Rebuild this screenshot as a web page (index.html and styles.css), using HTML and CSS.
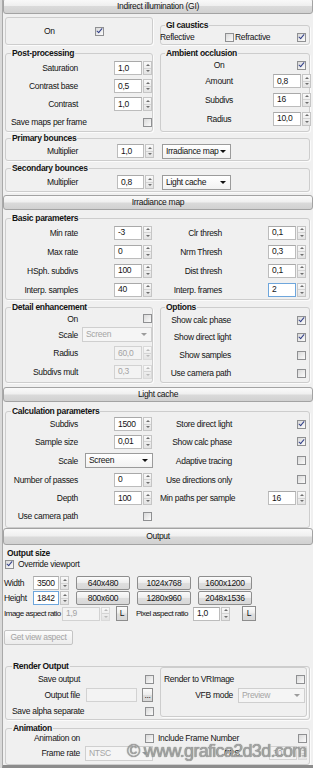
FILE: index.html
```html
<!DOCTYPE html>
<html lang="en">
<head>
<meta charset="utf-8">
<title>Render settings</title>
<link rel="stylesheet" href="styles.css">
</head>
<body>
<div class="page">

<div class="roll-head first">Indirect illumination (GI)</div>
<div class="roll-body">
  <div class="cols">
    <div class="col lcol">
      <div class="box onbox"><span class="on-lbl">On</span><span class="cb on"></span></div>
      <fieldset class="grp lgrp pp">
        <legend>Post-processing</legend>
        <div class="row h18"><span class="lbl">Saturation</span><span class="ctl"><span class="inp">1,0</span><span class="spin"><i></i><i></i></span></span></div>
        <div class="row h18"><span class="lbl">Contrast base</span><span class="ctl"><span class="inp">0,5</span><span class="spin"><i></i><i></i></span></span></div>
        <div class="row h18"><span class="lbl">Contrast</span><span class="ctl"><span class="inp">1,0</span><span class="spin"><i></i><i></i></span></span></div>
        <div class="row h18"><span class="lbl">Save maps per frame</span><span class="ctl"><span class="cb"></span></span></div>
      </fieldset>
    </div>
    <div class="col rcol">
      <fieldset class="grp rgrp gic">
        <legend>GI caustics</legend>
        <div class="row h14 caus"><span class="c-l1">Reflective</span><span class="cb"></span><span class="c-l2">Refractive</span><span class="cb on"></span></div>
      </fieldset>
      <fieldset class="grp rgrp ao">
        <legend>Ambient occlusion</legend>
        <div class="row h14"><span class="lbl">On</span><span class="ctl"><span class="cb on"></span></span></div>
        <div class="row h18"><span class="lbl">Amount</span><span class="ctl"><span class="inp">0,8</span><span class="spin"><i></i><i></i></span></span></div>
        <div class="row h19"><span class="lbl">Subdivs</span><span class="ctl"><span class="inp">16</span><span class="spin"><i></i><i></i></span></span></div>
        <div class="row h19"><span class="lbl">Radius</span><span class="ctl"><span class="inp">10,0</span><span class="spin"><i></i><i></i></span></span></div>
      </fieldset>
    </div>
  </div>

  <fieldset class="grp fgrp pb">
    <legend>Primary bounces</legend>
    <div class="row h16 bounce"><span class="lbl">Multiplier</span><span class="inp">1,0</span><span class="spin"><i></i><i></i></span><span class="dd">Irradiance map</span></div>
  </fieldset>
  <fieldset class="grp fgrp sb">
    <legend>Secondary bounces</legend>
    <div class="row h18 bounce"><span class="lbl">Multiplier</span><span class="inp">0,8</span><span class="spin"><i></i><i></i></span><span class="dd">Light cache</span></div>
  </fieldset>
</div>

<div class="roll-head irr">Irradiance map</div>
<div class="roll-body">
  <fieldset class="grp fgrp basic">
    <legend>Basic parameters</legend>
    <div class="row2">
      <div class="row h19 half l"><span class="lbl">Min rate</span><span class="ctl"><span class="inp">-3</span><span class="spin"><i></i><i></i></span></span></div>
      <div class="row h19 half r"><span class="lbl">Clr thresh</span><span class="ctl"><span class="inp">0,1</span><span class="spin"><i></i><i></i></span></span></div>
    </div>
    <div class="row2">
      <div class="row h19 half l"><span class="lbl">Max rate</span><span class="ctl"><span class="inp">0</span><span class="spin"><i></i><i></i></span></span></div>
      <div class="row h19 half r"><span class="lbl">Nrm Thresh</span><span class="ctl"><span class="inp">0,3</span><span class="spin"><i></i><i></i></span></span></div>
    </div>
    <div class="row2">
      <div class="row h19 half l"><span class="lbl">HSph. subdivs</span><span class="ctl"><span class="inp">100</span><span class="spin"><i></i><i></i></span></span></div>
      <div class="row h19 half r"><span class="lbl">Dist thresh</span><span class="ctl"><span class="inp">0,1</span><span class="spin"><i></i><i></i></span></span></div>
    </div>
    <div class="row2">
      <div class="row h19 half l"><span class="lbl">Interp. samples</span><span class="ctl"><span class="inp">40</span><span class="spin"><i></i><i></i></span></span></div>
      <div class="row h19 half r"><span class="lbl">Interp. frames</span><span class="ctl"><span class="inp focus">2</span><span class="spin"><i></i><i></i></span></span></div>
    </div>
  </fieldset>

  <div class="cols de-row">
    <fieldset class="grp lgrp de lcol">
      <legend>Detail enhancement</legend>
      <div class="row h13"><span class="lbl">On</span><span class="ctl"><span class="cb"></span></span></div>
      <div class="row h19"><span class="lbl">Scale</span><span class="ctl"><span class="dd dis de-dd">Screen</span></span></div>
      <div class="row h18"><span class="lbl">Radius</span><span class="ctl"><span class="inp dis">60,0</span><span class="spin dis"><i></i><i></i></span></span></div>
      <div class="row h19"><span class="lbl">Subdivs mult</span><span class="ctl"><span class="inp dis">0,3</span><span class="spin dis"><i></i><i></i></span></span></div>
    </fieldset>
    <fieldset class="grp rgrp opt rcol">
      <legend>Options</legend>
      <div class="row h16"><span class="lbl">Show calc phase</span><span class="ctl"><span class="cb on"></span></span></div>
      <div class="row h18"><span class="lbl">Show direct light</span><span class="ctl"><span class="cb on"></span></span></div>
      <div class="row h18"><span class="lbl">Show samples</span><span class="ctl"><span class="cb"></span></span></div>
      <div class="row h18"><span class="lbl">Use camera path</span><span class="ctl"><span class="cb"></span></span></div>
    </fieldset>
  </div>
</div>

<div class="roll-head lc">Light cache</div>
<div class="roll-body">
  <fieldset class="grp fgrp calc">
    <legend>Calculation parameters</legend>
    <div class="row2">
      <div class="row h16 half l"><span class="lbl">Subdivs</span><span class="ctl"><span class="inp">1500</span><span class="spin"><i></i><i></i></span></span></div>
      <div class="row h16 half r"><span class="lbl">Store direct light</span><span class="ctl"><span class="cb on"></span></span></div>
    </div>
    <div class="row2">
      <div class="row h19 half l"><span class="lbl">Sample size</span><span class="ctl"><span class="inp">0,01</span><span class="spin"><i></i><i></i></span></span></div>
      <div class="row h19 half r"><span class="lbl">Show calc phase</span><span class="ctl"><span class="cb on"></span></span></div>
    </div>
    <div class="row2">
      <div class="row h19 half l"><span class="lbl">Scale</span><span class="dd lc-dd">Screen</span></div>
      <div class="row h19 half r"><span class="lbl">Adaptive tracing</span><span class="ctl"><span class="cb"></span></span></div>
    </div>
    <div class="row2">
      <div class="row h19 half l"><span class="lbl">Number of passes</span><span class="ctl"><span class="inp">0</span><span class="spin"><i></i><i></i></span></span></div>
      <div class="row h19 half r"><span class="lbl">Use directions only</span><span class="ctl"><span class="cb"></span></span></div>
    </div>
    <div class="row2">
      <div class="row h18 half l"><span class="lbl">Depth</span><span class="ctl"><span class="inp">100</span><span class="spin"><i></i><i></i></span></span></div>
      <div class="row h18 half r"><span class="lbl">Min paths per sample</span><span class="ctl"><span class="inp">16</span><span class="spin"><i></i><i></i></span></span></div>
    </div>
    <div class="row2">
      <div class="row h18 half l"><span class="lbl">Use camera path</span><span class="ctl"><span class="cb"></span></span></div>
      <div class="row h18 half r"></div>
    </div>
  </fieldset>
</div>

<div class="roll-head out">Output</div>
<div class="out-body">
  <div class="os-title">Output size</div>
  <div class="row h12 ov"><span class="cb on"></span><span class="ov-l">Override viewport</span></div>
  <div class="row h14 sz"><span class="sz-l">Width</span><span class="inp sz-in">3500</span><span class="spin"><i></i><i></i></span><span class="btn b1">640x480</span><span class="btn">1024x768</span><span class="btn">1600x1200</span></div>
  <div class="row h14 sz sz2"><span class="sz-l">Height</span><span class="inp sz-in focus">1842</span><span class="spin"><i></i><i></i></span><span class="btn b1">800x600</span><span class="btn">1280x960</span><span class="btn">2048x1536</span></div>
  <div class="row h15 ar"><span class="ar-l1">Image aspect ratio</span><span class="inp dis ar-in1">1,9</span><span class="spin dis"><i></i><i></i></span><span class="btn lbtn1">L</span><span class="ar-l2">Pixel aspect ratio</span><span class="inp ar-in2">1,0</span><span class="spin"><i></i><i></i></span><span class="btn lbtn2">L</span></div>
  <div class="gva-wrap"><span class="btn dis gva">Get view aspect</span></div>

  <fieldset class="grp ro">
    <legend>Render Output</legend>
    <div class="ro-wrap">
      <div class="ro-left">
        <div class="row h16"><span class="lbl">Save output</span><span class="ctl"><span class="cb"></span></span></div>
        <div class="row h16"><span class="lbl">Output file</span><span class="inp dis of-in">&nbsp;</span><span class="btn dots">...</span></div>
        <div class="row h16"><span class="lbl">Save alpha separate</span><span class="ctl"><span class="cb"></span></span></div>
      </div>
      <div class="box vr">
        <div class="row h16"><span class="lbl">Render to VRImage</span><span class="ctl"><span class="cb"></span></span></div>
        <div class="row h16"><span class="lbl">VFB mode</span><span class="dd dis vfb">Preview</span></div>
      </div>
    </div>
  </fieldset>

  <fieldset class="grp ro anim">
    <legend>Animation</legend>
    <div class="row2 a2">
      <div class="row h10 half l"><span class="lbl">Animation on</span><span class="ctl"><span class="cb"></span></span></div>
      <div class="row h10 half r"><span class="ifn">Include Frame Number</span><span class="ctl"><span class="cb"></span></span></div>
    </div>
    <div class="row2 a2">
      <div class="row h20 half l"><span class="lbl">Frame rate</span><span class="dd dis fr">NTSC</span></div>
      <div class="row h20 half r"><span class="fps">FPS</span><span class="ctl"><span class="inp dis">30</span><span class="spin dis"><i></i><i></i></span></span></div>
    </div>
  </fieldset>
</div>

</div>
<div class="wm">© www.grafica2d3d.com</div>
</body>
</html>
```

FILE: styles.css
```css
* { box-sizing: border-box; }
html, body { margin: 0; padding: 0; }
body {
  width: 313px; height: 768px; overflow: hidden; position: relative;
  background: linear-gradient(to right, #d9d9d9 0, #d9d9d9 2px, #f0f0f0 2px);
  font-family: "Liberation Sans", Arial, sans-serif;
  font-size: 8.5px; letter-spacing: -0.3px; color: #141414;
}
.page {
  margin-left: 2px; height: 768px; overflow: hidden;
  border-left: 1px solid #a9a9a9; border-bottom: 3px solid #8c8c8c;
  background: #f0f0f0;
}

/* rollout headers */
.roll-head {
  height: 15px; border: 1px solid #a3a3a3; border-radius: 3px;
  background: linear-gradient(#fafafa 0%, #efefef 47%, #dadada 53%, #d1d1d1 100%);
  display: flex; align-items: center; justify-content: center; line-height: 1;
}
.roll-head.first { margin-top: -2px; height: 16px; }
.roll-head.irr { margin-top: 3px; }
.roll-head.lc { margin-top: 4px; }
.roll-head.out { height: 17px; }
.roll-body { padding: 0 3px 0 2px; }

/* group boxes */
.box { border: 1px solid #cdcdcd; border-radius: 3px; box-shadow: 1px 1px 0 #fbfbfb; }
.grp {
  margin: 0; padding: 0; min-width: 0;
  border: 1px solid #cdcdcd; border-radius: 3px; box-shadow: 1px 1px 0 #fbfbfb;
}
.grp legend { padding: 0 1px; font-weight: bold; line-height: 10px; height: 10px; }
.lgrp { padding: 0 0 0 5px; }
.rgrp { padding: 0 3px 0 4px; }
.fgrp { padding: 0 3px 0 5px; }

.cols { display: flex; gap: 7px; margin-top: 3px; }
.lcol { width: 148px; flex: none; }
.rcol { width: 150px; flex: none; }
.col { display: flex; flex-direction: column; gap: 3px; }

.onbox { height: 28px; display: flex; align-items: center; padding-left: 38px; }
.onbox .cb { margin-left: 40px; }

.pp .row:first-of-type { margin-top: 1px; }
.gic { margin-top: 3px; }
.ao { padding-bottom: 3px; }
.ao .lbl { width: 108px; text-align: center; }

.caus { margin-left: -5px; }
.c-l1 { width: 65px; }
.c-l2 { width: 62px; margin-left: 1px; }

.pb { margin-top: 1px; padding-bottom: 1px; }
.sb { margin-top: 2px; }
.bounce .inp { margin-left: 39px; width: 27px; }
.bounce .dd { margin-left: 8px; width: 69px; }

.basic { margin-top: 3px; }
.de-row { margin-top: 2px; align-items: stretch; }
.de { padding-bottom: 1px; }
.de-dd { width: 70px; }
.opt .lbl { width: 66px; }

.calc { margin-top: 4px; padding-bottom: 2px; }
.calc .r .lbl { width: 72px; }
.lc-dd { margin-left: 7px; width: 68px; }

/* rows */
.row { display: flex; align-items: center; white-space: nowrap; }
.h10 { height: 10px; } .h12 { height: 12px; } .h13 { height: 13px; } .h14 { height: 14px; }
.h15 { height: 15px; } .h16 { height: 16px; } .h18 { height: 18px; } .h19 { height: 19px; }
.h20 { height: 20px; }
.lbl { flex: none; width: 67px; text-align: right; white-space: nowrap; }
.ctl { margin-left: auto; display: flex; align-items: center; }
.row2 { display: flex; gap: 8px; }
.half.l { width: 141px; flex: none; }
.half.r { flex: 1; min-width: 0; }
.r .lbl { width: 62px; }

/* controls */
.cb {
  flex: none; width: 9px; height: 9px; border: 1px solid #8f9092;
  background: linear-gradient(135deg, #d9d9d9, #fbfbfb);
  display: flex; align-items: center; justify-content: center;
}
.cb.on::after {
  content: ""; width: 2px; height: 5px;
  border: solid #33418a; border-width: 0 1.5px 1.5px 0;
  transform: translateY(-1px) rotate(40deg);
}
.inp {
  flex: none; width: 28px; height: 14px; padding-left: 3px;
  border: 1px solid #bcbcbc; border-top-color: #a9a9a9; background: #fff;
  display: flex; align-items: center; line-height: 1;
}
.inp.dis { background: #f3f3f3; color: #a3a3a3; border-color: #d2d2d2; }
.inp.focus { border-color: #6ea6dc; }
.spin {
  flex: none; width: 9px; height: 14px; margin-left: 1px;
  border: 1px solid #c5c5c5; background: linear-gradient(#f9f9f9, #e3e3e3);
  display: flex; flex-direction: column;
}
.spin i { flex: 1; display: flex; align-items: center; justify-content: center; }
.spin i + i { border-top: 1px solid #d4d4d4; }
.spin i::before {
  content: ""; border-left: 2px solid transparent; border-right: 2px solid transparent;
  border-bottom: 2px solid #6e6e6e;
}
.spin i + i::before { border-bottom: 0; border-top: 2px solid #6e6e6e; }
.spin.dis { border-color: #dadada; }
.spin.dis i::before { border-bottom-color: #b9b9b9; }
.spin.dis i + i::before { border-top-color: #b9b9b9; }

.dd {
  flex: none; height: 15px; padding: 0 4px 0 3px;
  border: 1px solid #9b9b9b; background: linear-gradient(#ffffff, #f2f2f2);
  display: flex; align-items: center; line-height: 1;
}
.dd::after {
  content: ""; margin-left: auto;
  border-left: 3px solid transparent; border-right: 3px solid transparent; border-top: 3px solid #111;
}
.dd.dis { border-color: #cfcfcf; background: #f5f5f5; color: #a5a5a5; }
.dd.dis::after { border-top-color: #9c9c9c; }

.btn {
  flex: none; height: 14px; border: 1px solid #8d8d8d; border-radius: 2px;
  background: linear-gradient(#fbfbfb 0%, #ededed 48%, #dedede 52%, #d8d8d8 100%);
  display: flex; align-items: center; justify-content: center; line-height: 1;
}
.btn.dis { color: #a3a3a3; border-color: #c4c4c4; background: linear-gradient(#fbfbfb, #ececec); }

/* output section */
.out-body { padding: 0 3px 0 1px; }
.os-title { font-weight: bold; margin: 3px 0 0 3px; line-height: 10px; height: 10px; }
.ov .cb { margin-left: 1px; }
.ov-l { margin-left: 4px; }
.sz { margin-top: 6px; }
.sz2 { margin-top: 1px; }
.sz-l { width: 29px; flex: none; }
.sz-in { width: 26px; }
.sz .btn { width: 54px; margin-left: 7px; }
.ar { margin-top: 1px; }
.ar-l1, .ar-l2 { font-size: 8px; letter-spacing: -0.5px; }
.ar-l1 { width: 58px; flex: none; }
.ar-in1 { width: 38px; }
.ar-in2 { width: 27px; }
.lbtn1 { width: 12px; height: 15px; margin-left: 6px; border-radius: 0; }
.ar-l2 { width: 57px; flex: none; margin-left: 8px; }
.lbtn2 { width: 14px; height: 15px; margin-left: 12px; border-radius: 0; }
.gva-wrap { display: flex; margin-top: 9px; }
.gva { width: 69px; height: 15px; }

.ro { margin: 16px 0 0 1px; padding: 0 2px 0 6px; }
.ro .lbl { width: 68px; }
.ro-wrap { display: flex; gap: 6px; }
.ro-left { width: 142px; flex: none; }
.of-in { width: 51px; margin-left: 6px; }
.dots { width: 11px; margin-left: 5px; border-radius: 0; }
.vr { flex: 1; margin-top: -4px; height: 50px; padding: 3px 1px 0 3px; }
.vr .lbl { width: 69px; }
.vfb { width: 67px; margin-left: 5px; }

.anim { margin-top: 3px; padding-bottom: 1px; }
.a2 { gap: 4px; }
.a2 .half.l { width: 142px; }
.fr { width: 68px; margin-left: 5px; }
.fps { margin-left: 66px; }

/* watermark overlay */
.wm {
  position: absolute; left: 127px; top: 742px;
  font-family: "Liberation Sans", Arial, sans-serif; font-size: 18px; line-height: 18px;
  letter-spacing: -0.7px; color: #a4a4a4; text-shadow: 0 0 1px #555, 1px 1px 0 rgba(255,255,255,0.6);
  white-space: nowrap;
}
```
